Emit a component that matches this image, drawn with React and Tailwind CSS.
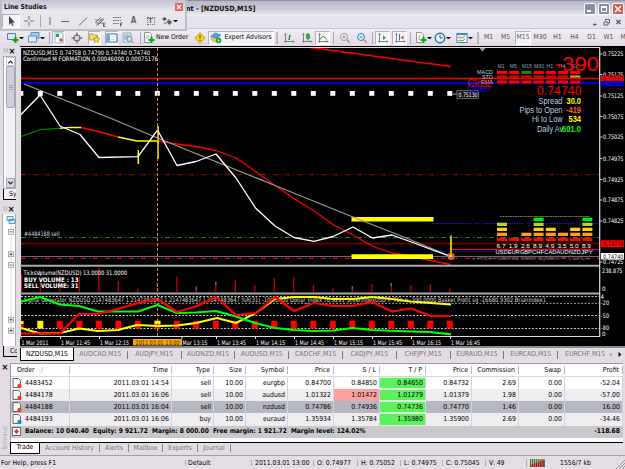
import React from 'react';

const xs = Array.from({ length: 23 }, (_, i) => 20.8 + i * 19.5);

const orders = [
  ['4483452', '2011.03.01 14:54', 'sell', '10.00', 'eurgbp', '0.84700', '0.84850', '0.84650', '0.84732', '2.69', '0.00', '-52.04'],
  ['4484178', '2011.03.01 16:06', 'sell', '10.00', 'audusd', '1.01322', '1.01472', '1.01279', '1.01379', '1.98', '0.00', '-57.00'],
  ['4484188', '2011.03.01 16:04', 'sell', '10.00', 'nzdusd', '0.74786', '0.74936', '0.74736', '0.74770', '1.46', '0.00', '16.00'],
  ['4484193', '2011.03.01 16:06', 'buy', '10.00', 'euraud', '1.35934', '1.35784', '1.35980', '1.35900', '2.69', '0.00', '-34.46'],
];

const headers = ['Time', 'Type', 'Size', 'Symbol', 'Price', 'S / L', 'T / P', 'Price', 'Commission', 'Swap', 'Profit'];

const cols = 'grid grid-cols-[59px_102px_42px_32px_42px_46px_46px_46px_46px_47px_46px_58px]';

const T = ({ x, y, w, s = 6.1, fill = '#fff', bold, arial, children }) => (
  <text
    x={x}
    y={y}
    fill={fill}
    fontSize={s}
    fontWeight={bold ? 700 : 400}
    textLength={w}
    lengthAdjust="spacingAndGlyphs"
    className={arial ? 'font-["Liberation_Sans",sans-serif]' : ''}
  >
    {children}
  </text>
);

const Line = ({ y, x1 = 21, x2 = 599, c, w = 1, d }) => (
  <line x1={x1} x2={x2} y1={y} y2={y} stroke={c} strokeWidth={w} strokeDasharray={d} />
);

const Poly = ({ p, c, w = 1.2 }) => (
  <polyline points={p} fill="none" stroke={c} strokeWidth={w} strokeLinejoin="round" />
);

const Icon = ({ children, className = '' }) => (
  <svg viewBox="0 0 12 12" className={`size-3 shrink-0 ${className}`} fill="none">
    {children}
  </svg>
);

const Cell = ({ w, on, children }) => (
  <div className={`${w} flex h-full shrink-0 items-center justify-center`}>
    {on ? (
      <div className="flex h-[14px] w-full items-center justify-center border border-[#b4b1c0] border-r-white border-b-white bg-[#f5f4f8]">
        {children}
      </div>
    ) : (
      children
    )}
  </div>
);

const Sep = ({ w = 'w-1' }) => (
  <div className={`${w} flex h-3 shrink-0 justify-center`}>
    <div className="w-px bg-[#aaa7b4]" />
  </div>
);

const Grip = () => (
  <div className="flex h-3 w-1.5 shrink-0 justify-center">
    <div className="w-0.5 bg-[#b8b5c0]" />
  </div>
);

const Arrow = () => <div className="w-[5px] shrink-0 border-x-[2px] border-t-[2px] border-x-transparent border-t-black" />;

const Plus = () => <path d="M8.5 5v6M5.5 8h6" stroke="#10a818" strokeWidth="2.2" />;

const Axes = () => <path d="M2.5 1.5v9M1 9.5h10M1.5 2.5l1-1 1 1M10 8.5l1 1-1 1" stroke="#666" strokeWidth=".8" />;

const Doc = () => <path d="M1.5.5h5l2 2v8h-7z" fill="#fff" stroke="#777" strokeWidth=".8" />;

const LineStudies = () => (
  <div className="absolute top-0 left-0 flex h-[31px] w-[187px] flex-col border-2 border-t-0 border-[#bebdc9] bg-[#e9e5ed]">
    <div className="flex h-[13px] shrink-0 items-center justify-between bg-linear-to-b from-[#c4c3d3] to-[#ececf2] pt-px pr-0.5 pl-0.5">
      <span className="text-[6.8px] font-bold text-[#111]">Line Studies</span>
      <div className="flex size-[8px] items-center justify-center bg-[#e3665a]">
        <svg viewBox="0 0 8 8" className="size-[8px]"><path d="M2 2l4 4M6 2L2 6" stroke="#fff" strokeWidth="1.2" /></svg>
      </div>
    </div>
    <div className="flex min-h-0 flex-1 items-center">
      <Cell w="w-[18px]" on>
        <Icon><path d="M4 1v9l2-2 1.4 3 1.2-.6L7.3 7.5H10z" fill="#444" /></Icon>
      </Cell>
      <Cell w="w-[18px]"><Icon><path d="M6 1v4M6 7v4M1 6h4M7 6h4" stroke="#666" strokeWidth=".9" /></Icon></Cell>
      <Sep w="w-[5px]" />
      <Cell w="w-[13px]"><Icon><path d="M6 2v8" stroke="#666" /></Icon></Cell>
      <Cell w="w-[18px]"><Icon><path d="M2 6.500h8" stroke="#666" /></Icon></Cell>
      <Cell w="w-[17px]"><Icon><path d="M2 10.500l8-8" stroke="#666" /></Icon></Cell>
      <Cell w="w-[17px]">
        <Icon>
          <path d="M1 8l6-6M2 11l7-8M1 5l8 0M2 8h7M4 10l6-6" stroke="#666" strokeWidth=".8" />
          <path d="M11.500 8h-2v3.500h2M9.500 9.700h1.500" stroke="#333" strokeWidth=".7" />
        </Icon>
      </Cell>
      <Cell w="w-[17px]">
        <Icon>
          <path d="M2 2.500h8M2 5.500h8M2 8.500h6" stroke="#666" strokeWidth=".9" strokeDasharray="1.500 .7" />
          <path d="M9.500 11.500v-3.500h2M9.500 9.700h1.500" stroke="#333" strokeWidth=".7" />
        </Icon>
      </Cell>
      <Cell w="w-[17px]"><span className="text-[8px] font-bold text-[#666]">A</span></Cell>
      <Cell w="w-[17px]">
        <div className="flex size-[8px] items-center justify-center border border-dotted border-[#777] text-[7px] font-bold text-[#666]">T</div>
      </Cell>
      <Cell w="w-[20px]">
        <Icon><path d="M1 4l2.500-2L6 4 3.500 6zM6 7l2.500-2L11 7 8.500 10z" fill="#555" /><path d="M3 7l1.500 2L8 4" stroke="#555" strokeWidth=".8" /></Icon>
        <Arrow />
      </Cell>
    </div>
  </div>
);

const TitleBar = () => (
  <div className="flex h-[16px] shrink-0 items-center justify-between border-t border-[#8f8fa5] bg-linear-to-b from-[#b6b6c8] via-[#cccbd9] to-[#eeeef4]">
    <span className="ml-[186px] text-[7.2px] font-bold whitespace-nowrap text-[#111]">nt - [NZDUSD,M15]</span>
    <div className="flex gap-0.5 pr-px">
      <div className="flex h-[12px] w-[12px] items-end rounded-xs border border-white bg-[#8b8ca8] p-0.5"><div className="h-0.5 w-1 bg-white" /></div>
      <div className="h-[12px] w-[12px] rounded-xs border border-white bg-[#8b8ca8] p-0.5"><div className="size-full border border-t-2 border-white" /></div>
      <div className="h-[12px] w-[12px] rounded-xs border border-white bg-[#d8564d]">
        <svg viewBox="0 0 10 10" className="size-full"><path d="M2 2l6 6M8 2L2 8" stroke="#fff" strokeWidth="1.6" /></svg>
      </div>
    </div>
  </div>
);

const MenuBar = () => (
  <div className="flex h-[12px] shrink-0 items-center justify-end bg-[#e5e3ef]">
    <svg viewBox="0 0 32 10" className="h-[10px] w-[32px]" fill="none" stroke="#555">
      <path d="M-.5 7.500h4" strokeWidth="1.500" />
      <path d="M12.500 4V2.500h4v3.500h-1M11 5h4v3h-4z" strokeWidth=".9" />
      <path d="M23.500 3l4 4M27.500 3l-4 4" strokeWidth="1.300" />
    </svg>
  </div>
);

const Toolbar = () => (
  <div className="flex h-[18px] shrink-0 items-center overflow-hidden border-t border-[#c9c6d2] bg-linear-to-b from-[#f1eef4] to-[#e1d9e3] text-[6.8px] text-[#555]">
    <Cell w="w-[26px]">
      <Icon className="ml-1"><path d="M.5 1.500h8v6h-8z" fill="#d8ebf5" stroke="#4a86b0" /><Plus /></Icon>
      <Arrow />
    </Cell>
    <Cell w="w-[20px]">
      <Icon><path d="M3 .5h8v6H3z" fill="#aecdea" stroke="#5c93bd" /><path d="M.5 4h8v6h-8z" fill="#dcecf8" stroke="#5c93bd" /></Icon>
      <Arrow />
    </Cell>
    <Sep w="w-[6px]" />
    <Cell w="w-[13px]" on>
      <Icon><path d="M2 1h8v10H2z" fill="#fff" stroke="#6ba7d4" strokeWidth=".8" /><path d="M3 2h3v3H3z" fill="#2aa12a" /><path d="M6.500 6.500h3v3h-3z" fill="#e04a22" /></Icon>
    </Cell>
    <Cell w="w-[23px]"><Icon><circle cx="6" cy="6" r="3.200" stroke="#555" /><path d="M6 .5v4M6 7.500v4M.5 6h4M7.500 6h4" stroke="#555" /></Icon></Cell>
    <Cell w="w-[13px]" on>
      <Icon><path d="M.5 2h4l1 1h3v5h-8z" fill="#f5db72" stroke="#a98a26" strokeWidth=".7" /><path d="M7.500 4l1 2.200 2.500.2-1.900 1.600.6 2.500-2.200-1.300-2.200 1.300.6-2.500L4 6.400l2.500-.2z" fill="#ffe02e" stroke="#997a12" strokeWidth=".6" /></Icon>
    </Cell>
    <div className="w-1 shrink-0" />
    <Cell w="w-[13px]" on><Icon><path d="M1 2h10v8H1z" fill="#fff" stroke="#3476b8" strokeWidth="1.200" /><path d="M2 3h2v6H2z" fill="#7fa8cf" /><path d="M5 4.500h4M5 7.500h4" stroke="#c4cede" strokeWidth=".7" /></Icon></Cell>
    <Cell w="w-[20px]"><Icon><path d="M1 1h8v9H1z" fill="#dfeaf1" stroke="#8a9aaa" strokeWidth=".8" /><path d="M3 3v5M5 2v5M7 3v5" stroke="#6f93b0" /><circle cx="7.500" cy="7" r="2.500" fill="#cde5f6" stroke="#557ea0" strokeWidth=".8" /><path d="M9.500 9l2 2" stroke="#c9a24a" strokeWidth="1.300" /></Icon></Cell>
    <Sep w="w-[5px]" />
    <div className="flex w-[49px] shrink-0 items-center gap-px whitespace-nowrap">
      <Icon><Doc /><path d="M3 4h4M3 6h3" stroke="#888" strokeWidth=".7" /><Plus /></Icon>
      <span className="text-[6.700px] text-black">New Order</span>
    </div>
    <Cell w="w-[16px]"><Icon><path d="M6 .8L11.200 6 6 11.200.8 6z" fill="#f6d21e" stroke="#b58f10" strokeWidth=".8" /><path d="M6 3v3.500M6 7.800v1.200" stroke="#6d5200" strokeWidth="1.200" /></Icon></Cell>
    <Cell w="w-[66px]" on>
      <Icon><path d="M1 6c0 5 9 5 9 0z" fill="#f0cf63" stroke="#a78731" strokeWidth=".6" /><path d="M.5 4.500L5 1l6 2-4 3z" fill="#4aa2d9" stroke="#2d6f9f" strokeWidth=".6" /><circle cx="8.500" cy="8.500" r="2.800" fill="#18a71c" /><path d="M7.800 7l2 1.500-2 1.500z" fill="#fff" /></Icon>
      <span className="ml-0.5 text-[6.700px] whitespace-nowrap text-black">Expert Advisors</span>
    </Cell>
    <Grip />
    <Cell w="w-[18px]"><Icon><Axes /><path d="M6.500 3v5M5 7h1.500M6.500 4H8" stroke="#138a1c" /></Icon></Cell>
    <Cell w="w-[17px]"><Icon><Axes /><path d="M7 1v7.500" stroke="#138a1c" /><path d="M5.500 2.500h3v4h-3z" fill="#1cc02a" stroke="#138a1c" strokeWidth=".6" /></Icon></Cell>
    <Cell w="w-[15px]" on><Icon><Axes /><path d="M3 7.500c2-4 4-4 6.500 0" stroke="#138a1c" /></Icon></Cell>
    <Sep w="w-[6px]" />
    <Cell w="w-[17px]"><Icon><circle cx="5" cy="5" r="3.500" fill="#f2f2f2" stroke="#999" /><path d="M5 3.500v3M3.500 5h3" stroke="#888" /><path d="M7.800 7.800l3 3" stroke="#999" strokeWidth="1.500" /></Icon></Cell>
    <Cell w="w-[17px]"><Icon><circle cx="5" cy="5" r="3.500" fill="#d5edfc" stroke="#3184c4" /><path d="M3.500 5h3" stroke="#3184c4" /><path d="M7.800 7.800l3 3" stroke="#b68c40" strokeWidth="1.500" /></Icon></Cell>
    <Sep w="w-[5px]" />
    <Cell w="w-[15px]" on><Icon><Axes /><path d="M6 3.500l3 2.200L6 8z" fill="#1ba52a" /></Icon></Cell>
    <div className="w-[2px] shrink-0" />
    <Cell w="w-[15px]" on><Icon><Axes /><path d="M5.500 2v6.500" stroke="#3c76a8" /><path d="M9.500 3.500v4L6.500 5.500z" fill="#d6401e" /></Icon></Cell>
    <Sep w="w-[7px]" />
    <Cell w="w-[18px]"><Icon><Doc /><path d="M4 8c0-4 1-5 2-5" stroke="#777" strokeWidth=".8" /><Plus /></Icon><Arrow /></Cell>
    <Cell w="w-[21px]"><Icon><circle cx="6" cy="6" r="4.700" fill="#eaf5fd" stroke="#2670b5" strokeWidth="1.500" /><path d="M6 3v3h2.500" stroke="#444" strokeWidth=".9" /></Icon><Arrow /></Cell>
    <Cell w="w-[22px]"><Icon><path d="M.8 1.500h10.400v9H.8z" fill="#f3f9fd" stroke="#4b87b9" /><path d="M1 2.500h10" stroke="#4b87b9" strokeWidth="1.200" /><path d="M2 6l2-1 2 1 3-2" stroke="#c5531c" strokeWidth=".9" /><path d="M2 9l2-1 2 1 3-2" stroke="#2a9c30" strokeWidth=".9" /></Icon><Arrow /></Cell>
    <Grip />
    <Cell w="w-[15px]">M1</Cell>
    <Cell w="w-[19px]">M5</Cell>
    <Cell w="w-[16px]" on>M15</Cell>
    <Cell w="w-[18px]">M30</Cell>
    <Cell w="w-[17px]">H1</Cell>
    <Cell w="w-[17px]">H4</Cell>
    <Cell w="w-[17px]">D1</Cell>
    <Cell w="w-[17px]">W1</Cell>
    <Cell w="w-[17px]">MN</Cell>
  </div>
);

const SidePanel = () => (
  <div className="flex w-[20px] shrink-0 flex-col bg-[#e3dee6] text-[7px]">
    <div className="flex h-[10px] shrink-0 items-center justify-between pr-1.5 pl-[3px] text-[#aaa]">M <b className="text-[9px] leading-none text-black">×</b></div>
    <div className="ml-[3px] flex h-[133px] w-[13px] shrink-0 flex-col border border-[#a9a7b3] bg-white pl-0.5">
      <div className="flex flex-1 flex-col bg-[#f2f0f5]">
        <div className="flex h-[9px] items-center justify-center border border-[#c6c5d2] bg-white">
          <svg viewBox="0 0 8 6" className="h-1.5 w-2"><path d="M1.500 4.500L4 2l2.500 2.500" fill="none" stroke="#222" strokeWidth="1.400" /></svg>
        </div>
        <div className="flex h-[42px] flex-col items-center justify-center gap-px rounded-xs border border-[#a4a3b6] bg-[#cfcedd]">
          <div className="h-px w-1 bg-[#9d9cb0]" />
          <div className="h-px w-1 bg-[#9d9cb0]" />
          <div className="h-px w-1 bg-[#9d9cb0]" />
        </div>
        <div className="flex-1" />
        <div className="flex h-[10px] items-center justify-center border border-[#a4a3b6] bg-[#d9d8e4]">
          <svg viewBox="0 0 8 6" className="h-1.5 w-2"><path d="M1.500 1.500L4 4l2.500-2.500" fill="none" stroke="#222" strokeWidth="1.400" /></svg>
        </div>
      </div>
    </div>
    <div className="ml-[3px] h-[11px] w-[13px] shrink-0 overflow-hidden border-b border-l border-black bg-[#f6f4f8] pl-[5px] leading-[10px]">Sy</div>
    <div className="mt-1 flex h-[10px] shrink-0 items-center justify-between pr-1.5 pl-[3px] text-[#aaa]">N <b className="text-[9px] leading-none text-black">×</b></div>
    <svg viewBox="0 213 14 133" className="ml-[2px] h-[133px] w-[14px] bg-white" fill="none">
      <path d="M.5 213v133M13.500 213v133" stroke="#a9a7b3" />
      <path d="M9 223v108" stroke="#bbb" strokeDasharray="1 1" />
      <path d="M5 215.500h6v4H5zM7 218.500h6v4H7z" fill="#d9effc" stroke="#3b8ccb" strokeWidth=".9" />
      {[231, 253.5, 264.5, 319.5, 330.5].map((y, i) => (
        <g key={y}>
          <rect x="6.500" y={y - 2.500} width="5" height="5" fill="#fff" stroke="#999" strokeWidth=".8" />
          <path d={i === 1 || i > 2 ? `M7.500 ${y}h3M9 ${y - 1.5}v3` : `M7.500 ${y}h3`} stroke="#333" strokeWidth=".8" />
        </g>
      ))}
    </svg>
  </div>
);

const frames = ['M1', 'M5', 'M15', 'M30', 'H1', 'H4', 'D1'];

const Signals = () => (
  <g>
    {frames.map((f, i) => (
      <g key={f}>
        <T x={497.500 + i * 12.2} y={68.300} s={5.500} w={f.length > 2 ? 10 : 7} fill="#8fa6bb" arial>{f}</T>
        <rect x={497 + i * 12.2} y="71" width="10.200" height="3" fill={i === 2 ? '#0a8a0a' : '#f00'} />
        <rect x={497 + i * 12.2} y="75.500" width="10.200" height="2" fill={i === 6 ? '#ffa500' : '#f00'} />
        <rect x={497 + i * 12.2} y="80.500" width="10.200" height="3" fill="#f00" />
      </g>
    ))}
    <T x={477} y={74.300} s={5.500} w={16} fill="#b8c8d8" arial>MACD</T>
    <T x={482} y={79} s={5.500} w={11} fill="#b8c8d8" arial>STO</T>
    <T x={481} y={84.300} s={5.500} w={12} fill="#b8c8d8" arial>EMA</T>
    <T x={467.500} y={92} s={10} w={23} fill="#1010e8" arial>Open</T>
    <T x={467.500} y={87} s={10} w={25} fill="#f00" arial>Close</T>
    <T x={555} y={70.500} s={21} w={44} fill="#f00" arial>-390</T>
    <T x={537} y={95.300} s={12.500} w={44.500} fill="#f00" arial>0.74740</T>
    <T x={538.500} y={104} s={8.300} w={24} fill="#b9cfe4" arial>Spread</T>
    <T x={566.500} y={104} s={8.300} w={14.500} fill="#ff0" bold arial>30.0</T>
    <T x={519.500} y={113.300} s={8.300} w={43} fill="#b9cfe4" arial>Pips to Open</T>
    <T x={566} y={113.300} s={8.300} w={15} fill="#ff5a1c" bold arial>-419</T>
    <T x={532} y={122.300} s={8.300} w={30.500} fill="#b9cfe4" arial>Hi to Low</T>
    <T x={568.500} y={122.300} s={8.300} w={12.500} fill="#ff0" bold arial>534</T>
    <T x={537} y={131.500} s={8.300} w={26} fill="#b9cfe4" arial>Daily Av</T>
    <T x={562} y={131.500} s={8.300} w={19} fill="#0f0" bold arial>601.0</T>
  </g>
);

const strength = [
  ['USD', '6.7', 4],
  ['EUR', '1.9', 1],
  ['GBP', '2.6', 2],
  ['CHF', '8.9', 5],
  ['CAD', '4.9', 3],
  ['AUD', '3.5', 2],
  ['NZD', '5.0', 3],
  ['JPY', '8.9', 5],
];
const levels = ['#f00', '#ffa012', '#ffce10', '#a8dc32', '#00f000'];

const Meter = () => (
  <g>
    <Line y={216.500} x1={500} x2={590} c="#888" d="2 .5" w={0.8} />
    {strength.map(([name, val, n], i) => (
      <g key={name}>
        {levels.slice(0, n).map((c, j) => (
          <rect key={c} x={497 + i * 12.2} y={237.700 - j * 5} width="10" height="3.300" fill={c} />
        ))}
        <T x={496.500 + i * 12.2} y={248} s={6} w={9} arial>{val}</T>
        <T x={495.500 + i * 12.2} y={254.300} s={6} w={12} arial>{name}</T>
      </g>
    ))}
    <T x={472} y={260.300} s={6} w={118} fill="#77777f" arial>« Price-Powered Meter System™ ©GPL »</T>
  </g>
);

const volumes = [275, 280, 276, 277, 268, 281, 289, 288, 276.5, 288, 285, 280, 285, 278, 277, 285, 288, 288, 284, 285, 285, 284, 289];
const blueTops = { 1: 273, 7: 284, 9: 286.5, 10: 282, 17: 286, 19: 283 };

const prices = [
  ['0.75225', 54], ['0.75175', 74.5], ['0.75125', 96], ['0.75075', 116.500], ['0.75025', 137], ['0.74975', 158.500],
  ['0.74925', 179.500], ['0.74875', 200], ['0.74825', 221], ['0.74725', 262],
];

const times = [
  ['1 Mar 2011', 20.500, 28], ['1 Mar 11:45', 60, 30], ['1 Mar 12:15', 99, 30], ['Mar 13:15', 181.5, 26], ['1 Mar 13:45', 216, 30],
  ['1 Mar 14:15', 255, 30], ['1 Mar 14:45', 294, 30], ['1 Mar 15:15', 333, 30], ['1 Mar 15:45', 372, 30],
  ['1 Mar 16:15', 411, 30], ['1 Mar 16:45', 450, 30],
];

const Chart = () => (
  <svg viewBox="20 46 605 300" className="h-[300px] w-[605px] shrink-0 bg-black">
    <Line y={174.700} c="#8c0000" w={1.300} d="5 3 1 3" />
    <Line y={237.500} c="#1e8c1e" w={1} d="5 3 1 3" />
    <Line y={243.700} c="#700000" w={1.800} />
    <Line y={256.500} c="#5d6b80" w={1} />
    <Line y={258.400} c="#e00000" w={1.200} d="5 3 1 3" />
    <Line y={223.500} x1={431} c="#0b0b9c" w={1} d="40 4 4 4" />
    <Line y={251.300} x1={431} c="#0b0b9c" w={1} />
    <Line y={249.500} x1={451} c="#f00" w={1} />
    <Line y={78.500} c="#f00" w={1.700} />
    <Line y={83} c="#0000d8" w={2} />

    <Poly p="310,47.500 340,51.500 410,61 451,66.500" c="#f00" w={1.500} />
    <Poly p="21,136.500 41,129.500 60,128.300" c="#008a00" />
    <Poly p="60,128.300 70,127.400 81,127.500" c="#ff0" w={1.400} />
    <Poly p="81,127.500 100,132 118,137" c="#f00" w={1.300} />
    <Poly p="118,137 137,141 158,141" c="#ff0" w={1.500} />
    <Poly p="158,141 177,144 196,146.500 216,150.500 236,158 255,171 275,185.500 294,198.500 314,211 334,225 353,235 372,246 392,253 410,256 430,260.500 451,264.500" c="#f00" w={1.300} />
    <path d="M351.500 219.200h82M351.500 256.600h81.500" stroke="#ff0" strokeWidth="4.600" />
    <Poly p="24,84 113,119.300 157.500,138 275,185.500 353,217 405,237.500 451,256.500" c="#999" w={1.200} />
    <path d="M138.300 150v14M158 126v33M451 235.500v21" stroke="#ff0" strokeWidth="1.500" />
    <Poly p="21,114.500 40,95 60,126 80,134.500 99,157.500 138,156.700 157.500,130 177,165.500 196,161.500 216,154 236,178 255.500,208 275,226 294,237.500 314,241.300 333,236.500 353,227 372.500,238 392,235 410,241.500 430,249 451,256.500" c="#fff" w={1.300} />
    <circle cx="451" cy="256.400" r="2.800" fill="#e8c8b0" fillOpacity=".5" stroke="#f0641e" strokeWidth="1.500" />
    {xs.map((x, i) => (
      <rect key={x} x={i ? x - 2.500 : 21} y="91" width={i ? 5 : 2.300} height="4.800" fill="#fff" />
    ))}
    <Line y={94} x1={453} x2={457} c="#aaa" />
    <rect x="457" y="90.500" width="21.500" height="8" fill="#111" stroke="#777" strokeWidth=".8" />
    <T x={458.500} y={97} w={19}>0.75130</T>
    <path d="M479.500 48h6l-3 3.500z" fill="#8aa0b4" />
    <T x={23} y={54.500} w={127}>NZDUSD,M15  0.74758 0.74790 0.74740 0.74740</T>
    <T x={23} y={60.700} w={135}>Confirmed M FORMATION 0.00046000 0.00075176</T>
    <T x={24} y={236} w={35.500} fill="#cde">#4484188 sell</T>
    <Signals />
    <Meter />

    {xs.map((x, i) => (
      <g key={x}>
        <path d={`M${i ? x : 21.5} ${volumes[i]}V292`} stroke="#d80000" strokeWidth="1.200" />
        {blueTops[i] && <path d={`M${x} ${blueTops[i]}v3`} stroke="#3a78c0" strokeWidth="1.400" />}
      </g>
    ))}
    <T x={23.500} y={275} w={103.500}>TicksVolume(NZDUSD) 13.0000 31.0000</T>
    <T x={24} y={281.800} w={54.500} bold>BUY VOLUME : 13</T>
    <T x={24} y={288} w={54.500} bold>SELL VOLUME: 31</T>

    <path d="M21 296.500h578M21 315.500h578M21 328.500h578" stroke="#ddd" strokeWidth=".9" strokeDasharray="2 1.500" />
    <Line y={303.300} c="#ccc" w={0.8} d="2 1.500" />
    <T x={24} y={302.300} w={182} fill="#d8dcdc">Signal Generator NZDUSD 2147483647 1 2147483647 1 2147483647 1</T>
    <T x={207} y={302.300} w={196} fill="#d8dcdc">2147483647  %R(31) -100.0000  Dollar_Index 76.9291  SilverIndexUSD P. 76h</T>
    <T x={405} y={302.300} w={141} fill="#d8dcdc">h. 390.0000  Basket Profit sq -16680.9302  BrianIndex1</T>
    {xs.map((x, i) => (
      <rect key={x} x={i ? x - 3 : 21} y="320.800" width={i ? 6 : 2.500} height="7.800" fill={i === 1 ? '#ff0' : '#f00'} />
    ))}
    <path d="M21 321h2.500v3H21zM154.500 320.800h6v3.500h-6z" fill="#ff0" />
    <Poly p="21,328 40,333.500 60,333 79,328.500 98,331 118,330 137,325 157.500,326 177,325.500 196,323 217,318 236,323 256,313 275,299 294,297 314,297 333,299 353,299 372,297 392,299 411,301.500 451,304.500" c="#ff0" w={2} />
    <Poly p="21,301.500 40,297 60,304.500 79,306 98,311.500 138,311.500 157.500,305 177,313 196,312.500 216,311 236,316.500 255,323 275,328 294,330 314,331 333,330.500 353,328 372,330 411,331.500 430,332 451,334.300" c="#0f0" w={2.200} />
    <Poly p="21,333.500 60,333.500 79,314 98,314 118,309 138,303 157.500,299 177,312 197,306 216,297 236,315 256,313 275,297 294,311 314,303 333,306 353,306 372,302 392,311.500 411,308.500 431,316 451,316" c="#f00" w={2.200} />
    <path d="M157.500 48v288" stroke="#d98a1a" strokeWidth="1" strokeDasharray="3 2" />

    <path d="M20 47.500h580M20.500 47v290" stroke="#ddd" strokeWidth="1.200" />
    <path d="M20 265.800h580M20 293.500h580" stroke="#aaa" strokeWidth="2" />
    <path d="M599.700 47v290M20 336.500h580" stroke="#ddd" strokeWidth="1.200" />

    {prices.map(([p, y]) => (
      <g key={p}>
        <path d={`M600 ${y}h2.500`} stroke="#ddd" strokeWidth=".9" />
        <T x={603} y={y + 2.400} w={20.500}>{p}</T>
      </g>
    ))}
    <rect x="601" y="75.500" width="23" height="5.700" fill="#f00" />
    <T x={603} y={80.700} w={20.500} fill="#500">0.75167</T>
    <rect x="601" y="81.200" width="23" height="5" fill="#00e" />
    <T x={603} y={86} w={20.500} fill="#003">0.75155</T>
    <rect x="601" y="240.200" width="23" height="7" fill="#f00" />
    <T x={603} y={246} w={20.500} fill="#300">0.74770</T>
    <rect x="601" y="253" width="23" height="6.500" fill="#fff" />
    <T x={603} y={258.500} w={20.500} fill="#111">0.74740</T>
    <T x={602} y={273} w={20.500}>238.875</T>
    <T x={602} y={291}>0</T>
    <T x={600.500} y={299}>4</T>
    <T x={601} y={305} w={8}>-20</T>
    <T x={601} y={317.700} w={8}>-50</T>
    <T x={601} y={329.500} w={8}>-80</T>
    <T x={602} y={335.500}>0</T>

    {times.map(([t, x, w]) => (
      <g key={t}>
        <path d={`M${x + 0.500} 336v3`} stroke="#ddd" />
        <T x={x + 1} y={344.500} w={w - 1}>{t}</T>
      </g>
    ))}
    <rect x="133" y="339" width="49" height="6.500" fill="#f7a40c" />
    <T x={135.500} y={344.500} w={44} fill="#3a2600">2011.03.01 13:00</T>
  </svg>
);

const ChartTabs = () => (
  <div className="flex h-[17px] shrink-0 text-[6.900px] text-[#777]">
    <div className="ml-[3px] h-[11px] w-[14px] shrink-0 overflow-hidden border-b border-l border-black pt-0.5 pl-1.5 text-black">Co</div>
    <div className="ml-[3px] flex flex-1 border-t-2 border-[#8b8890] bg-[#e4dce4]">
      <div className="flex h-[13px] w-[54px] shrink-0 items-center justify-center border border-t-0 border-black bg-white text-black">NZDUSD,M15</div>
      {['AUDCAD,M15', 'AUDJPY,M15', 'AUDNZD,M15', 'AUDUSD,M15', 'CADCHF,M15', 'CADJPY,M15', 'CHFJPY,M15', 'EURAUD,M15', 'EURCAD,M15', 'EURCHF,M15'].map((t, i) => (
        <div key={t} className="flex h-[13px] w-[53.800px] shrink-0 items-center">
          <span className="flex-1 text-center">{t}</span>
          {i < 9 && <span className="h-2 w-px bg-[#777]" />}
        </div>
      ))}
      <svg viewBox="0 0 14 12" className="-ml-1 h-[13px] w-[14px]"><path d="M3.500 4v4L1.500 6z" fill="#999" /><path d="M10.500 3.500v5l3-2.500z" fill="#000" /></svg>
    </div>
  </div>
);

const OrderIcon = ({ buy }) => (
  <Icon><path d="M2 1.500h5.500l2 2v7H2z" fill="#fff" stroke="#666" /><circle cx="8.500" cy="9" r="2.200" fill={buy ? '#2487d8' : '#e2451c'} /></Icon>
);

const Terminal = () => (
  <div className="flex h-[92px] shrink-0 bg-[#e4dce4] text-[6.900px] text-black">
    <div className="flex w-[10px] shrink-0 flex-col items-center justify-between pb-1">
      <b className="text-[9px] leading-none">×</b>
      <span className="rotate-180 text-[6.500px] leading-none text-[#aaa] [writing-mode:vertical-rl]">Terminal</span>
    </div>
    <div className="flex w-[613px] shrink-0 flex-col">
      <div className="border-t border-l border-[#999] bg-white">
        <div className={`${cols} h-[13px] items-center border-b border-[#dcd8de]`}>
          <div className="flex h-[8px] items-center justify-between border-r border-[#b6b9cc] pl-1.5">Order<span className="w-7 text-[#999]">/</span></div>
          {headers.map((h, i) => (
            <div key={i} className="flex h-[8px] items-center justify-end border-r border-[#b6b9cc] pr-[3px]">{h}</div>
          ))}
        </div>
        {orders.map((o, r) => (
          <div key={o[0]} className={`${cols} h-[12.150px] ${r === 2 ? 'bg-[#b4b6c0]' : r % 2 ? 'bg-[#f0edf1]' : 'bg-white'}`}>
            {o.map((v, i) => (
              <div
                key={i}
                className={`flex items-center border-r border-[#d5d2da] ${i === 0 ? 'gap-0.5' : 'justify-end pr-0.5'} ${i === 7 ? 'border-y border-y-[#d9f5d9] bg-[#5cf25c]' : ''} ${i === 6 && r === 1 ? 'bg-[#ffa0a0]' : ''}`}
              >
                {i === 0 && <OrderIcon buy={r === 3} />}
                {v}
              </div>
            ))}
          </div>
        ))}
        <div className="flex h-[12px] items-center bg-[#c9c8ca] pr-[3px] text-[6.700px] font-bold">
          <Icon className="mr-0.5"><path d="M1.500 1.500h8v8h-8z" fill="#fff" stroke="#666" /><path d="M5.500 3l2.500 2.500L5.500 8 3 5.500z" fill="#d63c18" /></Icon>
          <span className="flex-1 text-[6.600px] whitespace-pre">Balance: 10 040.40  Equity: 9 921.72  Margin: 8 000.00  Free margin: 1 921.72  Margin level: 124.02%</span>
          <span>-118.68</span>
        </div>
        <div className="h-[4px]" />
      </div>
      <div className="flex h-[12px] border-t border-black text-[#777]">
        <div className="flex h-[11px] w-[30px] items-center justify-center border border-t-0 border-black bg-white text-black">Trade</div>
        <div className="flex h-[11px] w-[60px] items-center"><span className="flex-1 text-center">Account History</span><i className="h-2 w-px bg-[#888]" /></div>
        <div className="flex h-[11px] w-[29px] items-center"><span className="flex-1 text-center">Alerts</span><i className="h-2 w-px bg-[#888]" /></div>
        <div className="flex h-[11px] w-[34px] items-center"><span className="flex-1 text-center">Mailbox</span><i className="h-2 w-px bg-[#888]" /></div>
        <div className="flex h-[11px] w-[35px] items-center"><span className="flex-1 text-center">Experts</span><i className="h-2 w-px bg-[#888]" /></div>
        <div className="flex h-[11px] w-[33px] items-center"><span className="flex-1 text-center">Journal</span><i className="h-2 w-px bg-[#888]" /></div>
      </div>
    </div>
  </div>
);

const StatusBar = () => (
  <div className="flex min-h-0 flex-1 items-center border-t border-[#a29ea6] bg-[#e5dde5] pt-px text-[6.800px] whitespace-nowrap text-black">
    <div className="w-[185px] pl-px">For Help, press F1</div>
    <div className="w-[66px] border-l border-[#b5b0b8] pl-0.5">Default</div>
    <div className="w-[62px] border-l border-[#b5b0b8] pl-[3px]">2011.03.01 13:00</div>
    <div className="w-[44px] border-l border-[#b5b0b8] pl-[3px]">O: 0.74977</div>
    <div className="w-[43px] border-l border-[#b5b0b8] pl-[3px]">H: 0.75052</div>
    <div className="w-[42px] border-l border-[#b5b0b8] pl-[3px]">L: 0.74975</div>
    <div className="w-[43px] border-l border-[#b5b0b8] pl-[3px]">C: 0.75045</div>
    <div className="w-[41px] border-l border-[#b5b0b8] pl-[3px]">V: 49</div>
    <div className="flex flex-1 items-center border-l border-[#b5b0b8] pl-[3px]">
      <svg viewBox="0 0 15 8" className="h-2 w-[15px]">
        {[0, 1, 2, 3, 4, 5, 6, 7].map((i) => (
          <g key={i}>
            <rect x={i * 1.900} y="0" width="1.300" height="8" fill="#4f7a2c" />
            <rect x={i * 1.900} y={6 - i * 0.700} width="1.300" height={2 + i * 0.700} fill="#b5121b" />
          </g>
        ))}
      </svg>
      <span className="ml-[15px]">1556/7 kb</span>
    </div>
    <svg viewBox="0 0 10 10" className="size-2.5 self-end"><path d="M1 10l9-9M4 10l6-6M7 10l3-3" stroke="#999" /></svg>
  </div>
);

const App = () => {
  return (
    <div className='relative flex h-[469px] w-[625px] flex-col overflow-hidden bg-[#e4dce4] font-["DejaVu_Sans_Condensed","DejaVu_Sans","Noto_Sans",sans-serif] text-[7px] leading-none'>
      <TitleBar />
      <MenuBar />
      <Toolbar />
      <div className="flex h-[300px] shrink-0">
        <SidePanel />
        <Chart />
      </div>
      <ChartTabs />
      <Terminal />
      <StatusBar />
      <LineStudies />
    </div>
  );
};

export default App;
